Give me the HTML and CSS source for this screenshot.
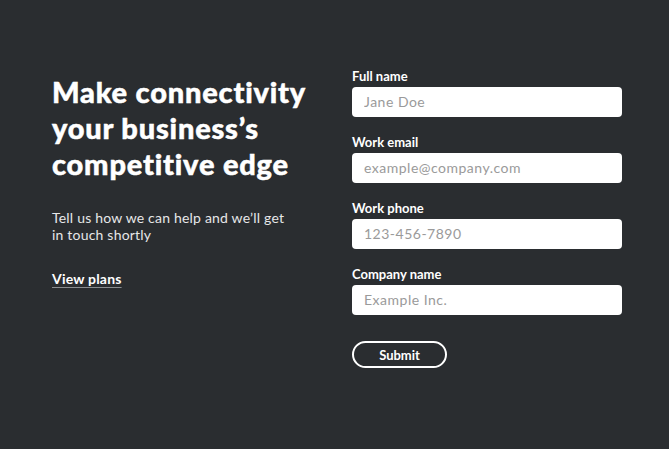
FILE: index.html
```html
<!DOCTYPE html>
<html lang="en">
<head>
  <meta charset="UTF-8" />
  <meta name="viewport" content="width=device-width, initial-scale=1.0" />
  <title>Contact sales</title>
  <link rel="stylesheet" href="styles.css">
</head>
<body>
  <main class="contact">
    <section class="intro">
      <h1>Make connectivity your business’s competitive edge</h1>
      <p>Tell us how we can help and we’ll get<br>in touch shortly</p>
      <a href="#" class="plans-link">View plans</a>
    </section>

    <form class="contact-form" onsubmit="return false;">
      <div class="field">
        <label for="fullName">Full name</label>
        <input id="fullName" type="text" placeholder="Jane Doe" />
      </div>
      <div class="field">
        <label for="workEmail">Work email</label>
        <input id="workEmail" type="email" placeholder="example@company.com" />
      </div>
      <div class="field">
        <label for="workPhone">Work phone</label>
        <input id="workPhone" type="tel" placeholder="123-456-7890" />
      </div>
      <div class="field">
        <label for="company">Company name</label>
        <input id="company" type="text" placeholder="Example Inc." />
      </div>
      <button type="submit">Submit</button>
    </form>
  </main>
</body>
</html>
```

FILE: styles.css
```css
body {
  margin: 0;
  padding: 0;
  background: #2a2d30;
  color: #fff;
  font-family: Lato, 'Noto Sans', sans-serif;
}

.contact {
  display: flex;
  padding: 68px 47px 0 52px;
  height: 381px;
}

.intro {
  width: 300px;
  flex-shrink: 0;
}

.intro h1 {
  width: 275px;
  margin: 6px 0 0;
  font-size: 29px;
  line-height: 36px;
  font-weight: 900;
  letter-spacing: 0.8px;
  -webkit-text-stroke: 0.5px #fff;
}

.intro p {
  margin: 27px 0 0;
  font-size: 14px;
  line-height: 17px;
  letter-spacing: 0.2px;
  color: #e6e7e8;
}

.plans-link {
  display: inline-block;
  margin-top: 27px;
  font-size: 14px;
  line-height: 17px;
  font-weight: 700;
  letter-spacing: 0.2px;
  color: #fff;
  text-decoration: underline;
  text-decoration-color: #8a8d90;
  text-underline-offset: 3px;
}

.contact-form {
  width: 270px;
}

.field {
  display: flex;
  flex-direction: column;
  margin-bottom: 17px;
}

.field label {
  font-size: 13px;
  line-height: 16px;
  font-weight: 700;
  margin-bottom: 3px;
}

.field input {
  box-sizing: border-box;
  height: 30px;
  padding: 0 12px 1px;
  border: none;
  border-radius: 4px;
  background: #fff;
  font-family: inherit;
  font-size: 14px;
  letter-spacing: 0.5px;
  color: #333;
}

.field input::placeholder {
  color: #9a9a9a;
}

.field input:focus {
  outline: none;
}

button {
  margin-top: 9px;
  box-sizing: border-box;
  width: 95px;
  height: 27px;
  border: 2px solid #fff;
  border-radius: 14px;
  background: transparent;
  color: #fff;
  font-family: inherit;
  font-size: 13px;
  font-weight: 700;
  cursor: pointer;
}
```
